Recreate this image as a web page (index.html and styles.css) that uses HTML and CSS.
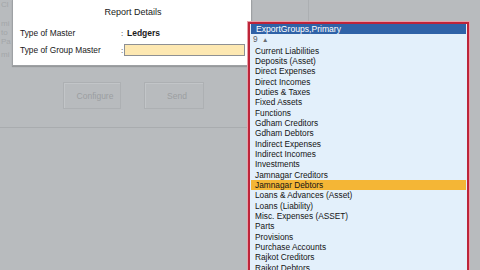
FILE: index.html
```html
<!DOCTYPE html>
<html>
<head>
<meta charset="utf-8">
<link rel="stylesheet" href="styles.css">
</head>
<body>
<div class="screen">
  <div class="bg-left">
    <div class="ghost">
      <span class="g1">Cl</span>
      <span class="g2">mi</span>
      <span class="g3">to</span>
      <span class="g4">Pa</span>
      <span class="g5">mi</span>
    </div>
    <div class="buttons">
      <div class="btn btn-configure">Configure</div>
      <div class="btn btn-send">Send</div>
    </div>
  </div>
  <div class="bg-right"></div>
</div>

<div class="dialog">
  <div class="title">Report Details</div>
  <div class="row row1">
    <span class="label">Type of Master</span>
    <span class="colon">:</span>
    <span class="value">Ledgers</span>
  </div>
  <div class="row row2">
    <span class="label">Type of Group Master</span>
    <span class="colon">:</span>
    <span class="input"></span>
  </div>
</div>

<div class="list">
  <div class="list-head">ExportGroups,Primary</div>
  <div class="list-count">9 <span class="tri">&#9650;</span></div>
  <div class="item">Current Liabilities</div>
  <div class="item">Deposits (Asset)</div>
  <div class="item">Direct Expenses</div>
  <div class="item">Direct Incomes</div>
  <div class="item">Duties &amp; Taxes</div>
  <div class="item">Fixed Assets</div>
  <div class="item">Functions</div>
  <div class="item">Gdham Creditors</div>
  <div class="item">Gdham Debtors</div>
  <div class="item">Indirect Expenses</div>
  <div class="item">Indirect Incomes</div>
  <div class="item">Investments</div>
  <div class="item">Jamnagar Creditors</div>
  <div class="item selected">Jamnagar Debtors</div>
  <div class="item">Loans &amp; Advances (Asset)</div>
  <div class="item">Loans (Liability)</div>
  <div class="item">Misc. Expenses (ASSET)</div>
  <div class="item">Parts</div>
  <div class="item">Provisions</div>
  <div class="item">Purchase Accounts</div>
  <div class="item">Rajkot Creditors</div>
  <div class="item">Rajkot Debtors</div>
</div>
</body>
</html>
```

FILE: styles.css
```css
html, body {
  margin: 0;
  padding: 0;
}
body {
  width: 480px;
  height: 270px;
  overflow: hidden;
  background: #b8bbbe;
  font-family: "Liberation Sans", Arial, sans-serif;
  position: relative;
}
.screen {
  display: flex;
  align-items: flex-start;
}
.bg-left {
  width: 248px;
  height: 127px;
  border-bottom: 1px solid #a9acaf;
  display: flex;
  flex-direction: column;
}
.ghost {
  display: flex;
  flex-direction: column;
  padding-top: 1px;
  font-size: 8px;
  line-height: 8px;
  color: #a3a6a9;
  height: 80px;
  box-sizing: border-box;
}
.ghost span {
  margin-left: 1px;
}
.g1 { margin-bottom: 11px; }
.g2 { margin-bottom: 1px; }
.g3 { margin-bottom: 1px; }
.g4 { margin-bottom: 5px; }
.buttons {
  display: flex;
  gap: 23px;
  padding-left: 63px;
  margin-top: 2px;
}
.btn {
  box-sizing: border-box;
  height: 27px;
  border: 1px solid #adb0b3;
  box-shadow: inset 1px 1px 0 #c2c5c8;
  display: flex;
  align-items: center;
  justify-content: center;
  font-size: 8.5px;
  color: #9b9ea1;
}
.btn-configure {
  width: 58px;
  padding-left: 6px;
}
.btn-send {
  width: 60px;
  padding-left: 6px;
}
.bg-right {
  margin-left: 60px;
  width: 0;
  height: 22px;
  border-left: 1px solid #acafb2;
}

/* dialog */
.dialog {
  position: absolute;
  left: 12px;
  top: 0;
  width: 240px;
  height: 66px;
  box-sizing: border-box;
  background: #ffffff;
  border: 1px solid #9ea1a4;
  border-top: none;
  box-shadow: 0 1px 1px rgba(0,0,0,0.18);
  padding: 6px 6px 0 6px;
  color: #1a1a1a;
}
.title {
  text-align: center;
  font-size: 9px;
  line-height: 12px;
  height: 12px;
  padding-left: 2px;
}
.row {
  display: grid;
  grid-template-columns: 102px 3px 1fr;
  align-items: center;
  height: 12px;
  font-size: 8.35px;
}
.row1 { margin-top: 9px; }
.row2 { margin-top: 5px; }
.label {
  padding-left: 1px;
}
.colon {
  font-size: 8px;
}
.value {
  font-weight: bold;
  font-size: 8.5px;
  padding-left: 3px;
}
.input {
  height: 12px;
  box-sizing: border-box;
  background: #fde8b2;
  border: 1px solid #8e9093;
}

/* dropdown list */
.list {
  position: absolute;
  left: 248px;
  top: 22px;
  width: 221px;
  height: 260px;
  box-sizing: border-box;
  border: 2px solid #bd2439;
  box-shadow: 0 0 0 1px #e8a0a8;
  background: #e3f0fb;
  padding: 0 1px;
  font-size: 8.3px;
  line-height: 10.33px;
  color: #141414;
}
.list-head {
  background: #2f62a7;
  color: #ffffff;
  padding-left: 5px;
  height: 10.33px;
  font-size: 8.6px;
}
.list-count {
  padding-left: 2px;
  color: #5a5d62;
}
.tri {
  font-size: 6.5px;
  margin-left: 2px;
  color: #6a6d72;
}
.item {
  padding-left: 4px;
  height: 10.33px;
  white-space: nowrap;
}
.item.selected {
  background: #f4b636;
}
```
